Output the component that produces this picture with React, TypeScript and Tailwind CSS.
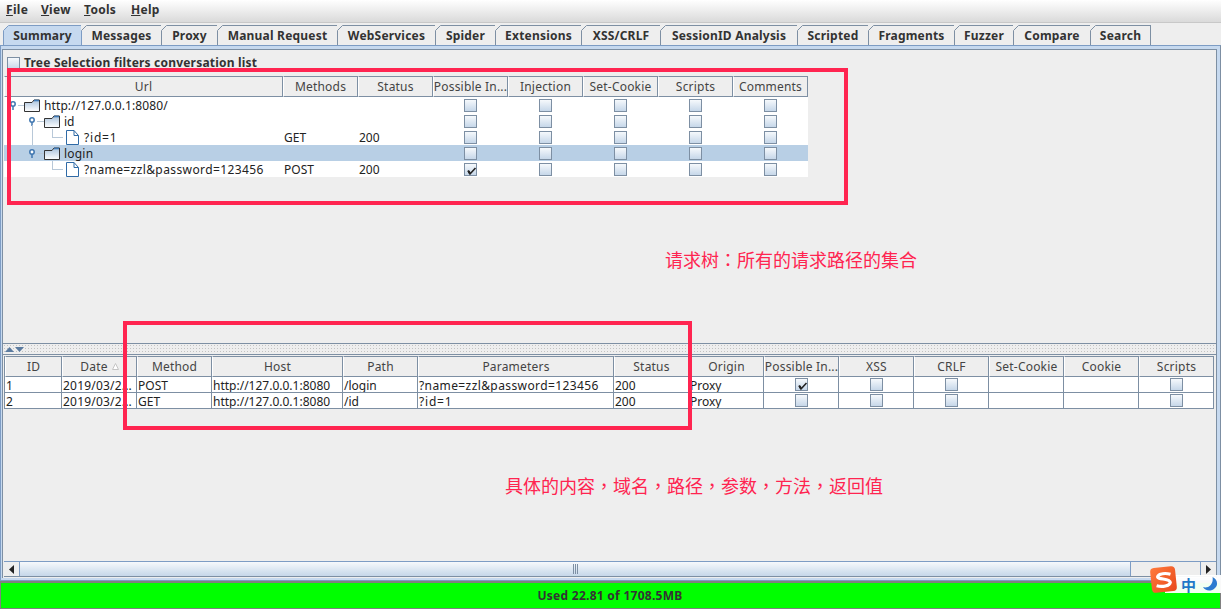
import React from "react";

const tabs: [string, number][] = [["Summary",79],["Messages",80],["Proxy",56],["Manual Request",120],["WebServices",98],["Spider",60],["Extensions",86],["XSS/CRLF",79],["SessionID Analysis",137],["Scripted",71],["Fragments",86],["Fuzzer",59],["Compare",77],["Search",60]];
const topCols: [string, number][] = [["Url",279],["Methods",75],["Status",75],["Possible In...",75],["Injection",75],["Set-Cookie",75],["Scripts",75],["Comments",75]];
const botCols: [string, number][] = [["ID",58],["Date",75],["Method",75],["Host",131],["Path",75],["Parameters",196],["Status",75],["Origin",75],["Possible In...",75],["XSS",75],["CRLF",75],["Set-Cookie",75],["Cookie",75],["Scripts",75]];

function Check({ on }: { on?: boolean }) {
  return (
    <span className="block w-[13px] h-[13px] border border-[#7d8fa3] bg-gradient-to-b from-[#f6f9fc] to-[#c6d7e9] relative">
      {on && (
        <svg className="absolute left-[1px] top-[1px]" width="11" height="11" viewBox="0 0 11 11">
          <path d="M2 5.5 L4 9 L9.5 3" fill="none" stroke="#222" strokeWidth="1.6" />
          <path d="M2.5 6 L4 8.5" fill="none" stroke="#222" strokeWidth="2.2" />
        </svg>
      )}
    </span>
  );
}

function Folder() {
  return (
    <svg width="17" height="13" viewBox="0 0 17 13" className="block shrink-0">
      <defs>
        <linearGradient id="fg" x1="0" y1="0" x2="0" y2="1">
          <stop offset="0" stopColor="#a9c2dc" />
          <stop offset="1" stopColor="#ffffff" />
        </linearGradient>
      </defs>
      <path d="M0.5 3.5 H8 L10 1 H15.5 V12.5 H0.5 Z" fill="url(#fg)" stroke="#333" />
      <path d="M10 1.5 H15" stroke="#3f78b4" strokeWidth="1.6" />
    </svg>
  );
}

function Doc() {
  return (
    <svg width="13" height="15" viewBox="0 0 13 15" className="block shrink-0">
      <path d="M0.5 0.5 H8 L12.5 5.5 V14.5 H0.5 Z" fill="#fff" stroke="#2f6aa6" />
      <path d="M8 0.5 V5.5 H12.5" fill="none" stroke="#2f6aa6" />
    </svg>
  );
}

function Handle() {
  return (
    <svg width="8" height="16" viewBox="0 0 8 16" className="block shrink-0">
      <circle cx="3" cy="7" r="2.2" fill="#fff" stroke="#3f76b0" strokeWidth="1.5" />
      <path d="M3 9.5 V13" stroke="#3f76b0" strokeWidth="1.5" />
    </svg>
  );
}

type Row = { depth: number; text: string; kind: "folder" | "doc"; m?: string; s?: string; sel?: boolean; on?: boolean; track?: string };
const treeRows: Row[] = [
  { depth: 0, text: "http://127.0.0.1:8080/", kind: "folder", track: "tracking-[0.1px]" },
  { depth: 1, text: "id", kind: "folder" },
  { depth: 2, text: "?id=1", kind: "doc", m: "GET", s: "200", track: "tracking-[0.8px]" },
  { depth: 1, text: "login", kind: "folder", sel: true, track: "tracking-[0.2px]" },
  { depth: 2, text: "?name=zzl&password=123456", kind: "doc", m: "POST", s: "200", on: true, track: "tracking-[0.4px]" },
];

function TreeCell({ r, i }: { r: Row; i: number }) {
  return (
    <div className="relative w-[279px] h-[16px] flex items-center text-[#222] whitespace-nowrap">
      {r.depth === 0 && (
        <div className="flex items-center pl-[6px]">
          <Handle />
          <span className="w-[6px] h-px bg-[#b8c8d8]" />
          <Folder />
          <span className={"ml-[3px] pt-[1px] " + (r.track ?? "")}>{r.text}</span>
        </div>
      )}
      {r.depth === 1 && (
        <div className="flex items-center pl-[25px]">
          <Handle />
          <span className="w-[7px] h-px bg-[#b8c8d8]" />
          <Folder />
          <span className={"ml-[3px] pt-[1px] " + (r.track ?? "")}>{r.text}</span>
        </div>
      )}
      {r.depth === 2 && (
        <div className="flex items-center pl-[62px]">
          <span className="absolute left-[48px] top-0 w-[11px] h-[9px] border-l border-b border-[#b8c8d8]" />
          <Doc />
          <span className={"ml-[5px] pt-[1px] " + (r.track ?? "")}>{r.text}</span>
        </div>
      )}
      {i === 2 && <span className="absolute left-[28px] top-0 h-[16px] w-px bg-[#b8c8d8]" />}
      {i === 1 && <span className="absolute left-[28px] top-[12px] h-[4px] w-px bg-[#b8c8d8]" />}
    </div>
  );
}

function Ann({ className }: { className: string }) {
  return <div className={"absolute border-[4px] border-[#ff2450] " + className} />;
}

function Zh({ children }: { children: string }) {
  return <span className="font-['Noto_Sans_CJK_TC',sans-serif]">{children}</span>;
}

const botRows = [
  ["1", "2019/03/2...", "POST", "http://127.0.0.1:8080", "/login", "?name=zzl&password=123456", "200", "Proxy", true],
  ["2", "2019/03/2...", "GET", "http://127.0.0.1:8080", "/id", "?id=1", "200", "Proxy", false],
] as const;

const menus: [string, string, number][] = [["F", "ile", 35], ["V", "iew", 43], ["T", "ools", 47], ["H", "elp", 40]];

export default function App() {
  return (
    <div className="relative w-[1221px] h-[609px] overflow-hidden bg-[#eeeeee] flex flex-col text-[12px] leading-[16px] font-['Noto_Sans',sans-serif] text-[#222]">
      {/* Menu */}
      <div className="h-[23px] shrink-0 flex items-center pl-[6px] pb-[2px] bg-gradient-to-b from-white to-[#dadada] border-b border-[#c8c8c8] font-bold text-[#333] tracking-[0.3px]">
        {menus.map(([a, b, w]) => (
          <span key={a} style={{ width: w }} className="shrink-0"><u>{a}</u>{b}</span>
        ))}
      </div>

      {/* Tabs */}
      <div className="h-[22px] shrink-0 flex items-end pl-[3px]">
        {tabs.map(([t, w], i) => (
          <div
            key={t}
            style={{ width: w }}
            className={
              "relative h-[20px] shrink-0 box-border flex items-center justify-center font-bold text-[#333] tracking-[0.2px] border-t border-r border-[#7d8fa3] whitespace-nowrap " +
              (i === 0 ? "bg-[#c6d9ef] border-l border-l-[#7d9cc4] border-t-[#7d9cc4] border-r-[#7d9cc4]" : "bg-[#eeeeee]")
            }
          >
            <svg width="6" height="6" viewBox="0 0 6 6" className="absolute left-[-1px] top-[-1px]">
              <path d="M0 0 H6 L0 6 Z" fill="#eeeeee" />
              <path d="M0.5 5.5 L5.5 0.5" stroke={i === 0 ? "#7d9cc4" : "#7d8fa3"} fill="none" />
            </svg>
            {t}
          </div>
        ))}
      </div>

      {/* Frame */}
      <div className="flex-1 min-h-0 flex flex-col bg-[#c6d9ef] border border-[#7d9cc4] border-r-[#7d8fa3] pl-[1px] pr-[3px] pt-[3px] pb-[2px]">
        <div className="flex-1 min-h-0 flex flex-col bg-[#eeeeee] border-l border-r border-t border-[#7d8fa3]">
          {/* Top pane */}
          <div className="h-[294px] shrink-0 border-b border-[#7d8fa3] flex flex-col pl-[1px]">
            <div className="h-[20px] mt-[3px] shrink-0 flex items-center gap-[4px] pl-[3px] font-bold text-[#333] tracking-[0.2px]">
              <Check />
              <span>Tree Selection filters conversation list</span>
            </div>
            <div className="mt-[3px] w-[804px]">
              <div className="flex">
                {topCols.map(([l, w]) => (
                  <div key={l} style={{ width: w }} className="h-[21px] shrink-0 box-border flex items-center justify-center border border-[#7d8fa3] border-l-white bg-[#eeeeee] text-[#444] tracking-[0.2px] whitespace-nowrap overflow-hidden">
                    {l}
                  </div>
                ))}
              </div>
              {treeRows.map((r, i) => (
                <div key={i} className={"flex h-[16px] " + (r.sel ? "bg-[#b8cfe5]" : "bg-white")}>
                  <TreeCell r={r} i={i} />
                  <div className="w-[75px] shrink-0 pl-[1px] pt-[1px]">{r.m}</div>
                  <div className="w-[75px] shrink-0 pl-[1px] pt-[1px]">{r.s}</div>
                  {[0, 1, 2, 3, 4].map((c) => (
                    <div key={c} className="w-[75px] shrink-0 flex items-center justify-center">
                      <Check on={c === 0 && r.on} />
                    </div>
                  ))}
                </div>
              ))}
            </div>
          </div>

          {/* Divider */}
          <div className="h-[11px] shrink-0 flex items-center gap-[1px] pl-[2px] bg-[radial-gradient(#c2c2c2_0.6px,transparent_0.7px)] bg-[length:3px_3px] border-b border-[#7d8fa3]">
            <svg width="9" height="5" viewBox="0 0 9 5"><path d="M4.5 0 L9 5 H0 Z" fill="#5b7ba0" /></svg>
            <svg width="9" height="5" viewBox="0 0 9 5"><path d="M0 0 H9 L4.5 5 Z" fill="#5b7ba0" /></svg>
          </div>

          {/* Bottom table */}
          <div className="flex-1 min-h-0 pt-[1px] pl-[1px] flex flex-col">
            <div className="w-[1210px] border-l border-[#7d8fa3]">
              <div className="flex">
                {botCols.map(([l, w], i) => (
                  <div key={i} style={{ width: i === 0 ? w - 1 : w }} className="relative h-[21px] shrink-0 box-border flex items-center justify-center border-t border-r border-b border-[#7d8fa3] border-l border-l-white bg-[#eeeeee] text-[#444] tracking-[0.2px] whitespace-nowrap overflow-hidden">
                    {l}
                    {l === "Date" && (
                      <svg width="7" height="7" viewBox="0 0 7 7" className="ml-[4px]"><path d="M3.5 0.5 L6.5 6.5 H0.5 Z" fill="#fff" stroke="#c4c4c4" /></svg>
                    )}
                  </div>
                ))}
              </div>
              {botRows.map((r) => (
                <div key={r[0]} className="flex h-[16px] bg-white">
                  {botCols.map(([l, w], c) => {
                    const isCheck = l === "Possible In..." || l === "XSS" || l === "CRLF" || l === "Scripts";
                    const tracked = c === 5 ? (r[0] === "1" ? "tracking-[0.4px]" : "tracking-[0.8px]") : c === 1 ? "tracking-[0.2px]" : "";
                    return (
                      <div key={c} style={{ width: c === 0 ? w - 1 : w }} className="shrink-0 box-border h-[16px] border-r border-b border-[#7d8fa3] pl-[1px] whitespace-nowrap overflow-hidden flex items-center justify-start">
                        {isCheck ? (
                          <span className="mx-auto"><Check on={l === "Possible In..." && r[8]} /></span>
                        ) : c < 8 ? (
                          <span className={"pt-[2px] " + tracked}>{String(r[c])}</span>
                        ) : null}
                      </div>
                    );
                  })}
                </div>
              ))}
            </div>
            <div className="flex-1" />
            {/* Scrollbar */}
            <div className="h-[16px] shrink-0 flex border-t border-b border-[#7d9cc4] border-b-[#7d8fa3] box-border mb-[1px]">
              <div className="w-[16px] shrink-0 flex items-center justify-center bg-[#eeeeee] border-r border-[#7d9cc4]">
                <svg width="5" height="9" viewBox="0 0 5 9"><path d="M5 0 V9 L0 4.5 Z" fill="#222" /></svg>
              </div>
              <div className="w-[1111px] shrink-0 flex items-center justify-center gap-[1px] border-r border-[#7d9cc4] bg-gradient-to-b from-[#f6f9fc] to-[#c6d7e9]">
                <span className="w-px h-[10px] bg-[#7d8fa3]" />
                <span className="w-px h-[10px] bg-[#7d8fa3]" />
                <span className="w-px h-[10px] bg-[#7d8fa3]" />
              </div>
              <div className="flex-1 bg-[#eeeeee]" />
              <div className="w-[16px] shrink-0 flex items-center justify-center bg-[#eeeeee] border-l border-[#7d9cc4]">
                <svg width="5" height="9" viewBox="0 0 5 9"><path d="M0 0 V9 L5 4.5 Z" fill="#222" /></svg>
              </div>
            </div>
          </div>
        </div>
      </div>

      {/* Status bar */}
      <div className="h-[28px] shrink-0 bg-[#00ff00] border-t-[2px] border-b border-l border-r border-[#808080] flex items-center justify-center font-bold text-[#333] tracking-[0.27px]">
        <span className="ml-[-1px]">Used 22.81 of 1708.5MB</span>
      </div>

      {/* Annotations */}
      <Ann className="left-[7px] top-[68px] w-[841px] h-[137px]" />
      <Ann className="left-[123px] top-[321px] w-[569px] h-[109px]" />
      <div className="absolute left-[665px] top-[246px] text-[18px] leading-[26px] text-[#ff2450] font-['Noto_Sans_CJK_SC',sans-serif] whitespace-nowrap">请求树<Zh>：</Zh>所有的请求路径的集合</div>
      <div className="absolute left-[505px] top-[472px] text-[18px] leading-[26px] text-[#ff2450] font-['Noto_Sans_CJK_SC',sans-serif] whitespace-nowrap">具体的内容<Zh>，</Zh>域名<Zh>，</Zh>路径<Zh>，</Zh>参数<Zh>，</Zh>方法<Zh>，</Zh>返回值</div>

      {/* IME widget */}
      <div className="absolute left-[1165px] top-[575px] w-[56px] h-[18px] bg-white/95 flex items-center pl-[16px] gap-[6px]">
        <span className="text-[#1f78c8] font-bold text-[15px] leading-[15px] font-['Noto_Sans_CJK_SC',sans-serif]">中</span>
        <svg width="15" height="14" viewBox="0 0 15 14" className="ml-[1px]"><path d="M9.5 0 C14.5 2 15.5 8 12 11 C8 15 2 14 0 10 C5 12 11 7 9.5 0 Z" fill="#2b7bd0" /></svg>
      </div>
      <div className="absolute left-[1151px] top-[567px] w-[25px] h-[25px] rounded-[4px] -rotate-6 bg-gradient-to-br from-[#ff7a3c] to-[#e8481a] flex items-center justify-center">
        <svg width="20" height="16" viewBox="0 0 20 16"><path d="M17 3 C12 1 5 1 4 4 C3 7 16 7 16 11 C15 15 7 15 2 13" fill="none" stroke="#fff" strokeWidth="3.2" /></svg>
      </div>
    </div>
  );
}
